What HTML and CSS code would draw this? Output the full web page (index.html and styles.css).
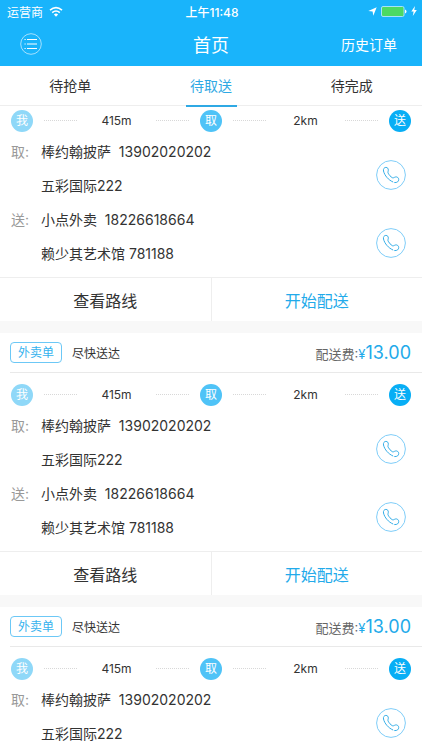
FILE: index.html
```html
<!DOCTYPE html>
<html lang="zh-CN">
<head>
  <meta charset="UTF-8" />
  <meta name="viewport" content="width=device-width, initial-scale=1.0" />
  <title>首页</title>
  <link rel="stylesheet" href="styles.css">
</head>
<body>

  <svg class="sprite" aria-hidden="true">
    <symbol id="phone" viewBox="0 0 30 30">
      <circle cx="15" cy="15" r="14.4" stroke="#7fcdf8" />
      <path d="M16.800 21.900C12.400 20 8.600 15.600 7.500 11C7.100 8.900 8.200 7.500 9.800 7.400C11.500 7.300 12.500 8.700 12.300 10.300C12.200 11.500 11.600 12.100 12.200 13.200C13.100 15 14.600 16.700 16.300 17.700C17.300 18.300 18 17.400 19.300 17C21 16.500 22.700 17.700 22.700 19.500C22.700 21.400 21.300 22.800 18.700 22.600" stroke="#35aee8" stroke-linecap="round" />
    </symbol>
  </svg>

  <header class="header">
    <div class="status">
      <span class="carrier">运营商
        <svg class="wifi" viewBox="0 0 14 11" width="14" height="11">
          <path d="M1 4.200Q7 -1 13 4.200M3.200 6.600Q7 3.400 10.800 6.600" fill="none" stroke="#fff" stroke-width="1.600" />
          <path d="M4.900 8.400Q7 6.800 9.100 8.400L7 10.700Z" fill="#fff" />
        </svg>
      </span>
      <span class="time">上午11:48</span>
      <span class="power">
        <svg width="9" height="9" viewBox="0 0 9 9"><path d="M8.700 0.300L5.300 8.700L4.600 4.500L0.300 3.900Z" fill="#fff" /></svg>
        <svg width="26" height="11" viewBox="0 0 26 11">
          <rect x="0.500" y="0.500" width="22.500" height="10" rx="1.500" fill="#4cd964" stroke="#a5e3fb" />
          <path d="M24 3.500Q25.500 4 25.500 5.500T24 7.500Z" fill="#fff" />
        </svg>
        <svg width="6" height="10" viewBox="0 0 6 10"><path d="M4 0L0.300 5.600H2.600L1.800 10L5.800 4.100H3.300Z" fill="#fff" /></svg>
      </span>
    </div>
    <div class="nav">
      <button class="menu" aria-label="菜单">
        <svg width="22" height="22" viewBox="0 0 22 22" fill="none" stroke="#fff">
          <circle cx="11" cy="11" r="10.300" stroke="#a4e0fd" />
          <path d="M7 6.500H17M7 11H17M7 15.500H17" />
          <path d="M4.500 6.500H5.700M4.500 11H5.700M4.500 15.500H5.700" />
        </svg>
      </button>
      <h1>首页</h1>
      <a class="history" href="#history">历史订单</a>
    </div>
  </header>

  <nav class="tabs">
    <a href="#grab">待抢单</a>
    <a href="#deliver" class="active">待取送</a>
    <a href="#finish">待完成</a>
  </nav>

  <main>
    <section class="order">
      <div class="route">
        <span class="dot me">我</span>
        <span class="leg">415m</span>
        <span class="dot pick">取</span>
        <span class="leg">2km</span>
        <span class="dot send">送</span>
      </div>
      <div class="contact">
        <span class="label">取:</span>
        <div class="info">
          <p>棒约翰披萨&nbsp; 13902020202</p>
          <p>五彩国际222</p>
        </div>
        <button class="call" aria-label="拨打电话"><svg><use href="#phone" /></svg></button>
      </div>
      <div class="contact">
        <span class="label">送:</span>
        <div class="info">
          <p>小点外卖&nbsp; 18226618664</p>
          <p>赖少其艺术馆 781188</p>
        </div>
        <button class="call" aria-label="拨打电话"><svg><use href="#phone" /></svg></button>
      </div>
      <div class="actions">
        <button>查看路线</button>
        <button class="start">开始配送</button>
      </div>
    </section>

    <section class="order">
      <div class="order-head">
        <span class="tag">外卖单</span>
        <span class="hint">尽快送达</span>
        <span class="fee">配送费:<span class="yen">¥</span><span class="price">13.00</span></span>
      </div>
      <div class="route">
        <span class="dot me">我</span>
        <span class="leg">415m</span>
        <span class="dot pick">取</span>
        <span class="leg">2km</span>
        <span class="dot send">送</span>
      </div>
      <div class="contact">
        <span class="label">取:</span>
        <div class="info">
          <p>棒约翰披萨&nbsp; 13902020202</p>
          <p>五彩国际222</p>
        </div>
        <button class="call" aria-label="拨打电话"><svg><use href="#phone" /></svg></button>
      </div>
      <div class="contact">
        <span class="label">送:</span>
        <div class="info">
          <p>小点外卖&nbsp; 18226618664</p>
          <p>赖少其艺术馆 781188</p>
        </div>
        <button class="call" aria-label="拨打电话"><svg><use href="#phone" /></svg></button>
      </div>
      <div class="actions">
        <button>查看路线</button>
        <button class="start">开始配送</button>
      </div>
    </section>

    <section class="order">
      <div class="order-head">
        <span class="tag">外卖单</span>
        <span class="hint">尽快送达</span>
        <span class="fee">配送费:<span class="yen">¥</span><span class="price">13.00</span></span>
      </div>
      <div class="route">
        <span class="dot me">我</span>
        <span class="leg">415m</span>
        <span class="dot pick">取</span>
        <span class="leg">2km</span>
        <span class="dot send">送</span>
      </div>
      <div class="contact">
        <span class="label">取:</span>
        <div class="info">
          <p>棒约翰披萨&nbsp; 13902020202</p>
          <p>五彩国际222</p>
        </div>
        <button class="call" aria-label="拨打电话"><svg><use href="#phone" /></svg></button>
      </div>
    </section>
  </main>

</body>
</html>
```

FILE: styles.css
```css
* {
  box-sizing: border-box;
}

body {
  margin: 0;
  background-color: #fff;
  color: #333;
  font-family: Inter, "Noto Sans CJK SC", sans-serif;
  font-size: 14px;
}

h1, p {
  margin: 0;
  font-weight: 400;
}

a {
  color: inherit;
  text-decoration: none;
}

button {
  padding: 0;
  border: none;
  background: none;
  color: inherit;
  font: inherit;
  cursor: pointer;
}

svg {
  display: block;
}

.sprite {
  display: none;
}

/* 顶部 */
.header {
  background-color: #19b4fb;
  color: #fff;
}

.status {
  display: grid;
  grid-template-columns: 1fr auto 1fr;
  align-items: center;
  height: 22px;
  padding: 0 5px 0 7px;
  font-size: 12px;
}

.carrier, .power {
  display: flex;
  align-items: center;
  gap: 6px;
}

.time {
  font-weight: 500;
}

.power {
  justify-content: flex-end;
  gap: 4px;
}

.nav {
  display: grid;
  grid-template-columns: 1fr auto 1fr;
  align-items: center;
  height: 44px;
  padding: 0 20px;
}

.nav h1 {
  font-size: 18px;
}

.menu {
  justify-self: start;
}

.history {
  justify-self: end;
  padding-right: 5px;
}

/* 标签栏 */
.tabs {
  display: flex;
  height: 40px;
  border-bottom: 1px solid #eee;
}

.tabs a {
  flex: 1;
  display: flex;
  justify-content: center;
  line-height: 40px;
}

.tabs .active {
  color: #2fa9e4;
}

.tabs .active::after {
  content: "";
  position: absolute;
  width: 51px;
  height: 39px;
  border-bottom: 2px solid #2fa9e4;
}

/* 订单 */
.order {
  border-bottom: 12px solid #f8f8f8;
}

.order:last-child {
  border-bottom: none;
}

.order-head {
  display: flex;
  align-items: center;
  height: 40px;
  margin: 0 0 7px 10px;
  padding-right: 11px;
  border-bottom: 1px solid #e9e9e9;
  font-size: 12px;
}

.tag {
  width: 52px;
  border: 1px solid #6cc8f6;
  border-radius: 4px;
  color: #35b2ee;
  line-height: 19px;
  text-align: center;
}

.hint {
  margin-left: 10px;
}

.fee {
  margin-left: auto;
  color: #666;
  font-size: 13px;
}

.yen, .price {
  color: #22aaea;
}

.price {
  font-size: 18px;
}

.route {
  display: flex;
  align-items: center;
  height: 29px;
  padding: 0 11px;
}

.dot {
  width: 22px;
  border-radius: 50%;
  color: #fff;
  font-size: 12px;
  line-height: 22px;
  text-align: center;
}

.me {
  background-color: #8fd8f8;
}

.pick {
  background-color: #4fc3f7;
}

.send {
  background-color: #08aef5;
}

.leg {
  flex: 1;
  display: flex;
  align-items: center;
  justify-content: space-between;
  margin: 0 11px;
  font-size: 12px;
}

.leg::before, .leg::after {
  content: "";
  width: 33px;
  border-top: 1px dotted #d8d8d8;
}

.contact {
  display: flex;
  padding: 0 16px 0 11px;
  line-height: 34px;
}

.label {
  width: 30px;
  color: #999;
}

.info {
  flex: 1;
}

.call {
  align-self: flex-start;
  margin-top: 25px;
}

.call svg {
  width: 30px;
  height: 30px;
  fill: none;
}

.actions {
  display: flex;
  height: 44px;
  margin-top: 6px;
  border-top: 1px solid #eee;
}

.actions button {
  flex: 1;
  font-size: 16px;
}

.actions .start {
  border-left: 1px solid #eee;
  color: #22aaea;
}
```
